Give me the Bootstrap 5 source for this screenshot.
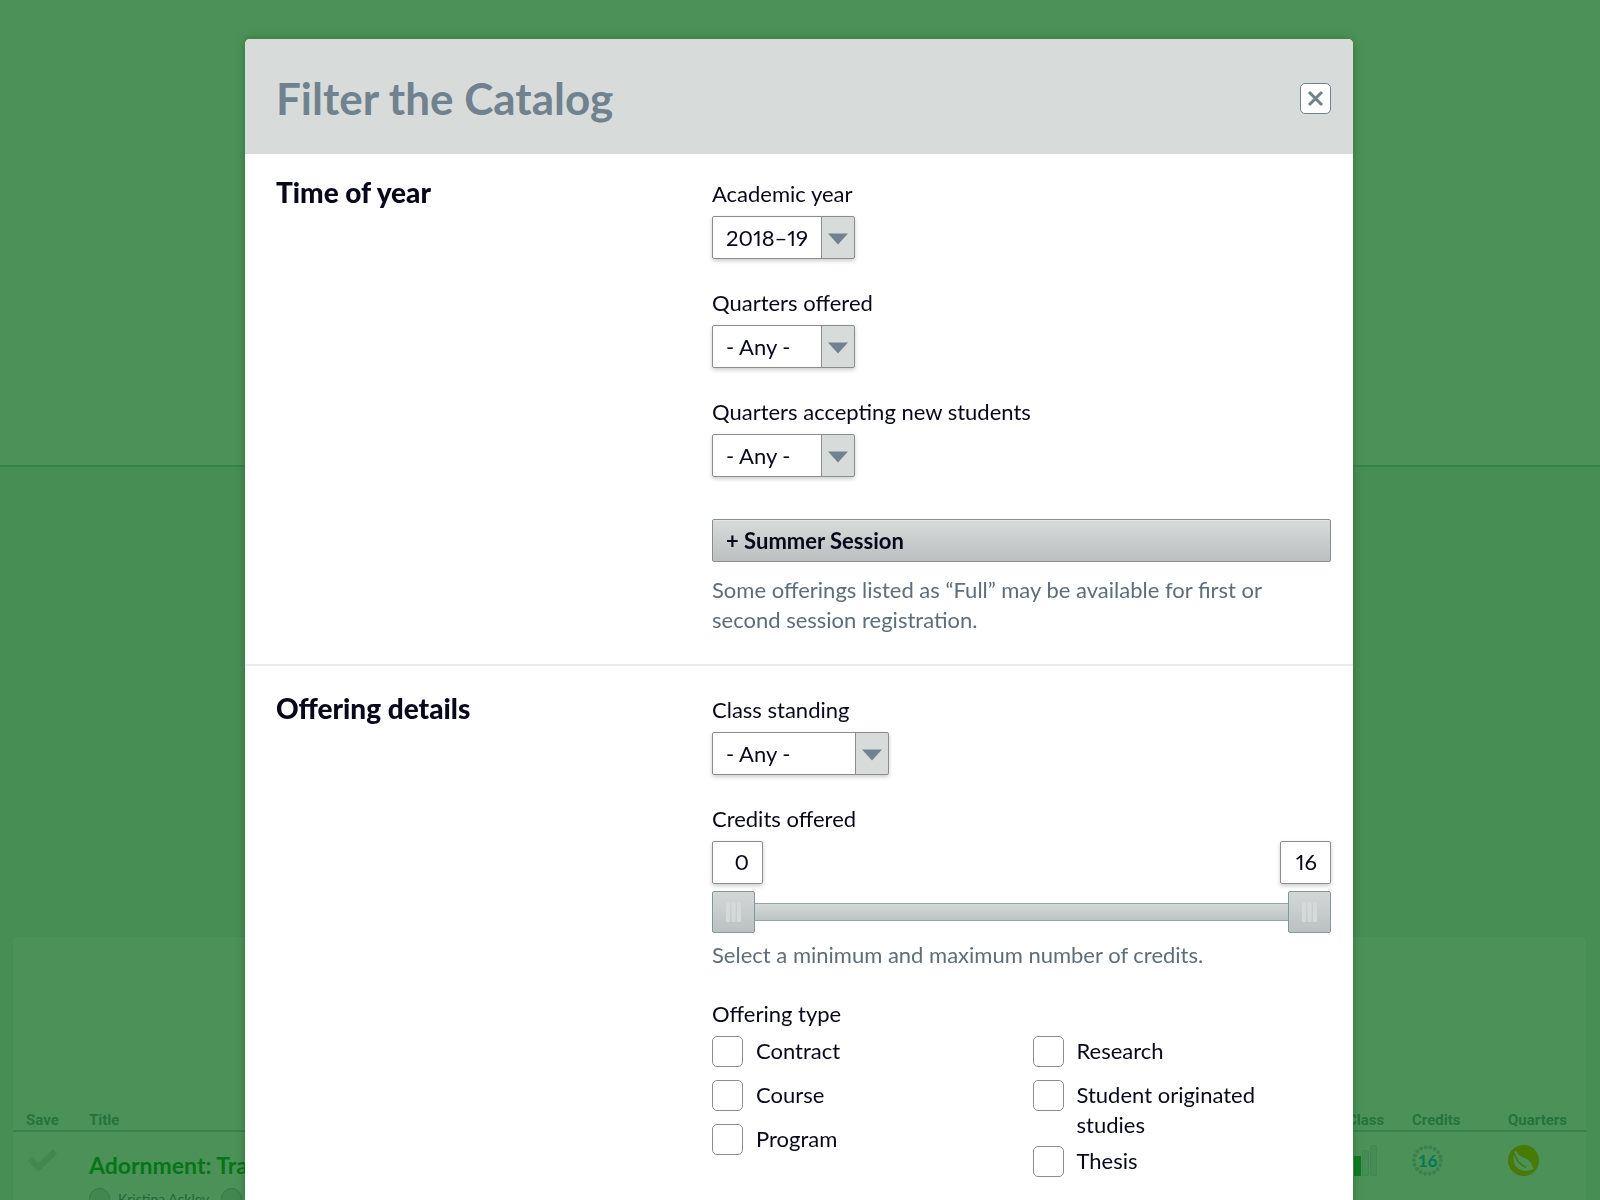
<!DOCTYPE html>
<html lang="en">
<head>
<meta charset="utf-8">
<meta name="viewport" content="width=device-width, initial-scale=1">
<title>Filter the Catalog</title>
<link href="https://cdn.jsdelivr.net/npm/bootstrap@5.3.0/dist/css/bootstrap.min.css" rel="stylesheet">
<style>
:root { --ink: #08081c; --slate: #6f828e; --mist: #d7dcda; --steel: #8a8c8d; }
body { font-family: Lato, "Open Sans", sans-serif; font-size: 22px; line-height: 30px; color: var(--ink); background: #478e54; height: 100vh; overflow: hidden; }

/* Catalog page behind the dialog */
.hero { height: 467px; background: #4c9258; border-bottom: 2px solid #33834a; }
.results { margin: 469px 13px 0 12px; padding-top: 172px; background: #4c9258; border: 1px solid #468c53; border-radius: 5px; }
.offerings { width: 100%; table-layout: fixed; border-collapse: collapse; font-size: 14px; line-height: 20px; }
.offerings th { padding: 0 0 0 13px; height: 22px; border-bottom: 2px solid #35824b; color: #24743f; font-family: Roboto, sans-serif; font-size: 15px; font-weight: 700; }
.offerings td { padding: 13px 0 0 13px; vertical-align: top; }
.col-save { width: 63px; }
.col-class { width: 65px; }
.col-credits { width: 96px; }
.col-quarters { width: 91px; }
.offerings svg { display: block; }
.offer-link { color: #057519; font-size: 23px; line-height: 32px; font-weight: 700; text-decoration: none; }
.faculty { color: #24673b; padding-top: 7px; }
.face { width: 21px; height: 21px; border-radius: 50%; background: #42874f; border: 1px solid #2f7c46; }

/* Dialog */
.filter-modal { padding-right: 2px; }
.filter-dialog { max-width: 1108px; margin: 39px auto 0; }
.filter-box { border: 0; border-radius: 5px; box-shadow: 0 0 8px rgba(0, 60, 20, .35); color: var(--ink); }
.filter-head { height: 115px; padding: 3px 22px 0 31px; background: var(--mist); border: 0; border-radius: 5px 5px 0 0; }
.filter-head h1 { font-size: 44px; line-height: 54px; font-weight: 700; color: var(--slate); }
.close-box { width: 31px; height: 31px; padding: 0; background: #fff; border: 1px solid var(--slate); border-radius: 5px; display: grid; place-items: center; }
.filter-part { padding: 25px 22px 29px 31px; border-bottom: 2px solid #eaeceb; }
.filter-part + .filter-part { padding-top: 29px; }
.filter-part h2 { font-size: 28px; line-height: 26px; font-weight: 900; width: 436px; }
.field { margin-bottom: 29px; }
.field label, .field legend { display: block; font-size: 22px; line-height: 30px; margin-bottom: 7px; }
.pick, .amount { height: 43px; border: 1px solid var(--steel); border-radius: 2px; font-size: 22px; line-height: 30px; font-variant-numeric: proportional-nums; color: var(--ink); box-shadow: 0 2px 4px rgba(0, 0, 0, .2); }
.pick { width: 143px; padding: 0 33px 0 13px; appearance: none;
  background: url("data:image/svg+xml,%3Csvg xmlns='http://www.w3.org/2000/svg' width='33' height='41'%3E%3Crect width='33' height='41' fill='%23d7dcda'/%3E%3Cpath d='M.5 0v41' stroke='%238a8c8d'/%3E%3Cpath d='M7 16.500h20l-10 11z' fill='%236f828e'/%3E%3C/svg%3E") right center no-repeat #fff; }
.pick-wide { width: 177px; }
.amount { width: 51px; padding: 0 13px 2px 0; text-align: right; background: #fff; }
.summer { display: block; width: 100%; height: 43px; margin: 42px 0 13px; padding: 0 13px; text-align: left; font-size: 22px; font-weight: 700; color: var(--ink); border: 1px solid var(--steel); border-radius: 2px; background: linear-gradient(#d7dcda, #bbbfc0); box-shadow: inset 0 1px #e2e6e4; }
.hint { color: #5d6d79; }
.slider { position: relative; height: 42px; margin: 7px 0; display: flex; align-items: center; }
.rail { width: 100%; height: 18px; border: 1px solid #95a4aa; background: linear-gradient(#d5dad8, #bdc2c3); }
.slider input { position: absolute; inset: 0; width: 100%; height: 42px; margin: 0; appearance: none; background: none; pointer-events: none; }
.slider input::-webkit-slider-thumb { appearance: none; pointer-events: auto; width: 43px; height: 42px; border: 1px solid #8497a0; border-radius: 2px;
  background: url("data:image/svg+xml,%3Csvg xmlns='http://www.w3.org/2000/svg' width='15' height='20'%3E%3Cpath d='M2 0v20M7.500 0v20M13 0v20' stroke='%23d5dad8' stroke-width='4'/%3E%3C/svg%3E") center no-repeat, linear-gradient(#d3d8d7, #bbc0c1); }
.types { column-gap: 22px; }
.choice { display: flex; gap: 13px; min-height: 38px; margin-bottom: 6px; padding-right: 24px; }
.choice input { flex: none; width: 31px; height: 31px; margin: 0; appearance: none; background: #fff; border: 1px solid var(--steel); border-radius: 5px; }
.choice input:checked { background: var(--slate); }
.field .choice label { margin: 0; }
</style>
</head>
<body>
<div aria-hidden="true">
  <div class="hero"></div>
  <div class="results">
    <table class="offerings">
      <thead>
        <tr><th class="col-save">Save</th><th>Title</th><th class="col-class">Class</th><th class="col-credits">Credits</th><th class="col-quarters">Quarters</th></tr>
      </thead>
      <tbody>
        <tr>
          <td><svg width="32" height="31" viewBox="0 0 32 31"><path d="M4 14l8.500 8.500L29 6.500" fill="none" stroke="#42884f" stroke-width="6"/></svg></td>
          <td>
            <div class="pt-1"><a class="offer-link" href="#">Adornment: Tra</a></div>
            <div class="faculty d-flex align-items-center gap-2">
              <span class="face"></span><span class="me-1">Kristina Ackley</span><span class="face"></span>
            </div>
          </td>
          <td><svg width="31" height="31" viewBox="0 0 31 31"><rect y="16" width="6" height="15" fill="#0d7b22"/><rect x="7" y="11" width="7" height="20" fill="#0d7b22"/><g fill="#478c54" stroke="#41874f"><rect x="15.500" y="5.500" width="6" height="25" rx="1"/><rect x="23.500" y=".5" width="6" height="30" rx="1"/></g></svg></td>
          <td><svg width="31" height="31" viewBox="0 0 31 31"><circle cx="15.500" cy="15.500" r="13.500" fill="none" stroke="#3a8050" stroke-width="4" stroke-linecap="round" stroke-dasharray="0 4.712"/><text x="15.500" y="21.500" text-anchor="middle" font-size="17" font-weight="700" fill="#04795a">16</text></svg></td>
          <td><svg width="31" height="31" viewBox="0 0 31 31"><circle cx="15.500" cy="15.500" r="15.500" fill="#487a05"/><path d="M6 9C4 16 7 23 13 25c4 1.500 8 1 13-1c-2-2-2-4-3-6c-2-5-9-5-12-8C9 9 10 7 8 6L6.500 6.500z" fill="#4c9258"/><path d="M6 8C8 15 12 20 18.500 22.500" fill="none" stroke="#487a05" stroke-width="1.500"/></svg></td>
        </tr>
      </tbody>
    </table>
  </div>
</div>

<div class="modal filter-modal d-block overflow-hidden" role="dialog" aria-labelledby="filterTitle">
  <div class="modal-dialog filter-dialog">
    <form class="modal-content filter-box">
      <div class="modal-header filter-head d-flex align-items-center justify-content-between">
        <h1 class="m-0" id="filterTitle">Filter the Catalog</h1>
        <button type="button" class="close-box" aria-label="Close"><svg width="17" height="17" viewBox="0 0 17 17"><path d="M2 2l13 13M15 2L2 15" stroke="#6f828e" stroke-width="3"/></svg></button>
      </div>

      <section class="filter-part d-flex">
        <h2 class="flex-shrink-0 m-0">Time of year</h2>
        <div class="flex-grow-1">
          <div class="field"><label for="year">Academic year</label><select class="pick d-block" id="year"><option>2018–19</option></select></div>
          <div class="field"><label for="offered">Quarters offered</label><select class="pick d-block" id="offered"><option>- Any -</option></select></div>
          <div class="field m-0"><label for="accepting">Quarters accepting new students</label><select class="pick d-block" id="accepting"><option>- Any -</option></select></div>
          <button type="button" class="summer">+ Summer Session</button>
          <p class="hint m-0">Some offerings listed as “Full” may be available for first or second session registration.</p>
        </div>
      </section>

      <section class="filter-part d-flex">
        <h2 class="flex-shrink-0 m-0">Offering details</h2>
        <div class="flex-grow-1">
          <div class="field"><label for="standing">Class standing</label><select class="pick pick-wide d-block" id="standing"><option>- Any -</option></select></div>
          <div class="field">
            <label for="minCredits">Credits offered</label>
            <div class="d-flex justify-content-between">
              <input class="amount" id="minCredits" type="text" value="0">
              <input class="amount" id="maxCredits" type="text" value="16" aria-label="Maximum credits">
            </div>
            <div class="slider">
              <div class="rail"></div>
              <input type="range" min="0" max="16" value="0" aria-label="Minimum credits">
              <input type="range" min="0" max="16" value="16" aria-label="Maximum credits">
            </div>
            <p class="hint m-0">Select a minimum and maximum number of credits.</p>
          </div>
          <fieldset class="field">
            <legend>Offering type</legend>
            <div class="types d-flex">
              <div class="w-50">
                <div class="choice"><input type="checkbox" id="contract"><label for="contract">Contract</label></div>
                <div class="choice"><input type="checkbox" id="course"><label for="course">Course</label></div>
                <div class="choice"><input type="checkbox" id="program"><label for="program">Program</label></div>
              </div>
              <div class="w-50">
                <div class="choice"><input type="checkbox" id="research"><label for="research">Research</label></div>
                <div class="choice"><input type="checkbox" id="studies"><label for="studies">Student originated studies</label></div>
                <div class="choice"><input type="checkbox" id="thesis"><label for="thesis">Thesis</label></div>
              </div>
            </div>
          </fieldset>
        </div>
      </section>
    </form>
  </div>
</div>
<script src="https://cdn.jsdelivr.net/npm/bootstrap@5.3.0/dist/js/bootstrap.bundle.min.js"></script>
</body>
</html>
